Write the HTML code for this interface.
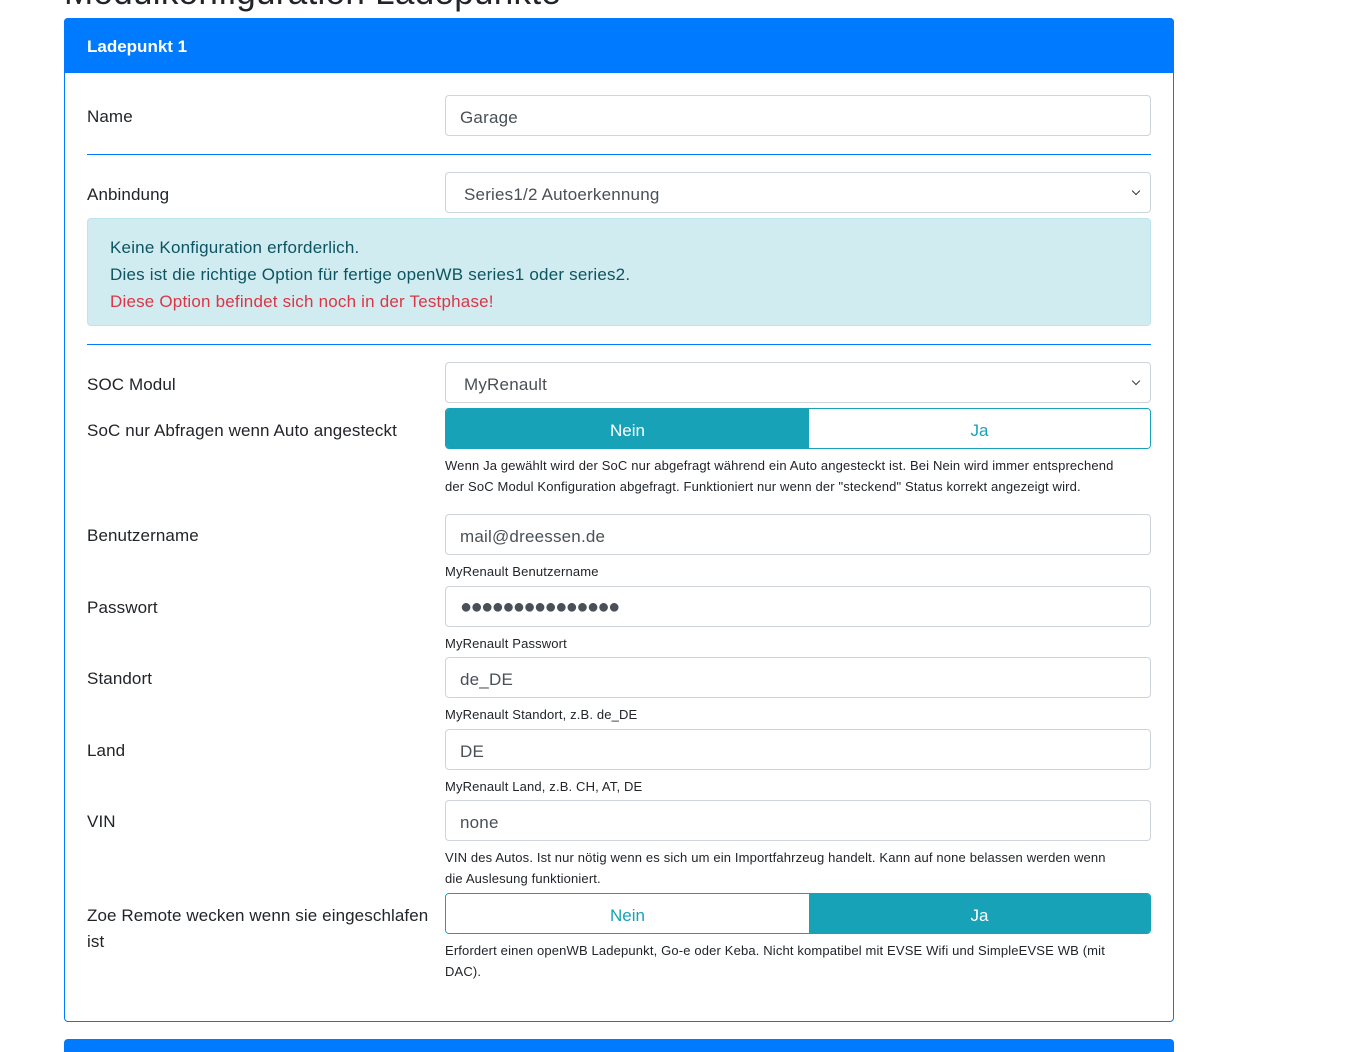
<!DOCTYPE html>
<html><head><meta charset="utf-8"><style>
*{box-sizing:border-box;margin:0;padding:0}
html,body{width:1349px;height:1052px;overflow:hidden}
body{background:#fff;font-family:"Liberation Sans",sans-serif;color:#212529;position:relative}
.a{position:absolute}
.lbl{position:absolute;left:87px;font-size:17px;line-height:24px;letter-spacing:0.1px}
.inp{position:absolute;left:445px;width:706px;height:41px;border:1px solid #ced4da;border-radius:4px;font-size:17px;color:#495057;padding:0 14px;line-height:43px;letter-spacing:0.2px}
.sel{padding-left:18px}
.sel:after{content:"";position:absolute;right:11px;top:15px;width:5px;height:5px;border-right:1.5px solid #343a40;border-bottom:1.5px solid #343a40;transform:rotate(45deg)}
.help{position:absolute;left:445px;width:700px;font-size:13px;line-height:21px;color:#212529;letter-spacing:0.15px}
.hr{position:absolute;left:87px;width:1064px;height:1px;background:#007bff}
.bg{position:absolute;left:445px;width:706px;height:41px;border:1px solid #17a2b8;border-radius:4px;overflow:hidden;display:flex;font-size:17px}
.bg div{text-align:center;line-height:43px}
.bg div:first-child{width:363px}.bg div:last-child{flex:1}
.on{background:#17a2b8;color:#fff}.off{background:#fff;color:#17a2b8}
</style></head><body>
<div class="a" style="left:64px;top:-25px;font-size:35px;line-height:35px;color:#212529;letter-spacing:0.3px">Modulkonfiguration Ladepunkte</div>
<div class="a" style="left:64px;top:18px;width:1110px;height:1004px;border:1px solid #007bff;border-radius:4px"></div>
<div class="a" style="left:64px;top:18px;width:1110px;height:55px;background:#007bff;border-radius:4px 4px 0 0;color:#fff;font-weight:bold;font-size:17px;line-height:57px;padding-left:23px">Ladepunkt 1</div>

<div class="lbl" style="top:105px">Name</div>
<div class="inp" style="top:95px">Garage</div>
<div class="hr" style="top:154px"></div>

<div class="lbl" style="top:183px">Anbindung</div>
<div class="inp sel" style="top:172px">Series1/2 Autoerkennung</div>
<div class="a" style="left:87px;top:218px;width:1064px;height:108px;background:#d1ecf1;border:1px solid #bee5eb;border-radius:4px;color:#0c5460;font-size:17px;line-height:27px;padding:15px 22px;letter-spacing:0.2px">Keine Konfiguration erforderlich.<br>Dies ist die richtige Option für fertige openWB series1 oder series2.<br><span style="color:#dc3545">Diese Option befindet sich noch in der Testphase!</span></div>
<div class="hr" style="top:344px"></div>

<div class="lbl" style="top:373px">SOC Modul</div>
<div class="inp sel" style="top:362px">MyRenault</div>
<div class="lbl" style="top:419px">SoC nur Abfragen wenn Auto angesteckt</div>
<div class="bg" style="top:408px"><div class="on">Nein</div><div class="off">Ja</div></div>
<div class="help" style="top:455px">Wenn Ja gewählt wird der SoC nur abgefragt während ein Auto angesteckt ist. Bei Nein wird immer entsprechend<br>der SoC Modul Konfiguration abgefragt. Funktioniert nur wenn der "steckend" Status korrekt angezeigt wird.</div>

<div class="lbl" style="top:524px">Benutzername</div>
<div class="inp" style="top:514px">mail@dreessen.de</div>
<div class="help" style="top:561px">MyRenault Benutzername</div>

<div class="lbl" style="top:596px">Passwort</div>
<div class="inp" style="top:586px;font-size:20px;letter-spacing:-1.5px;line-height:41px">●●●●●●●●●●●●●●●</div>
<div class="help" style="top:633px">MyRenault Passwort</div>

<div class="lbl" style="top:667px">Standort</div>
<div class="inp" style="top:657px">de_DE</div>
<div class="help" style="top:704px">MyRenault Standort, z.B. de_DE</div>

<div class="lbl" style="top:739px">Land</div>
<div class="inp" style="top:729px">DE</div>
<div class="help" style="top:776px">MyRenault Land, z.B. CH, AT, DE</div>

<div class="lbl" style="top:810px">VIN</div>
<div class="inp" style="top:800px">none</div>
<div class="help" style="top:847px">VIN des Autos. Ist nur nötig wenn es sich um ein Importfahrzeug handelt. Kann auf none belassen werden wenn<br>die Auslesung funktioniert.</div>

<div class="lbl" style="top:903px;line-height:26px;width:350px">Zoe Remote wecken wenn sie eingeschlafen ist</div>
<div class="bg" style="top:893px"><div class="off">Nein</div><div class="on">Ja</div></div>
<div class="help" style="top:940px">Erfordert einen openWB Ladepunkt, Go-e oder Keba. Nicht kompatibel mit EVSE Wifi und SimpleEVSE WB (mit<br>DAC).</div>

<div class="a" style="left:64px;top:1039px;width:1110px;height:13px;background:#007bff;border-radius:4px 4px 0 0"></div>
</body></html>
